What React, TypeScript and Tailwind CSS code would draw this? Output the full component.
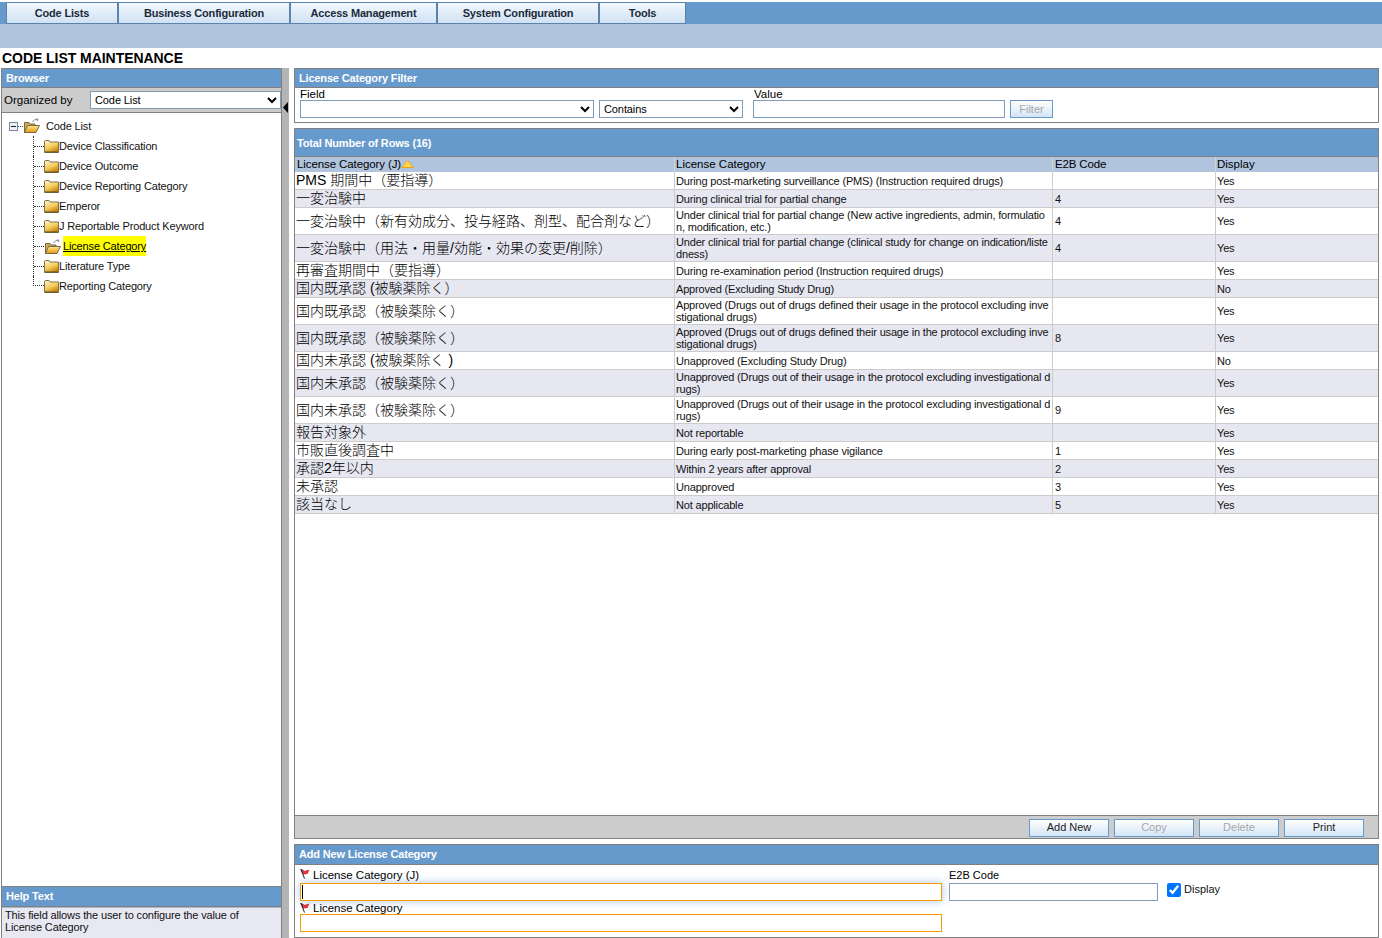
import React from "react";

const navTabs = [
  ["Code Lists", "w-[112px]"],
  ["Business Configuration", "w-[172px]"],
  ["Access Management", "w-[147px]"],
  ["System Configuration", "w-[162px]"],
  ["Tools", "w-[87px]"],
];

const rows: [string, string, string, string, boolean][] = [
  ["PMS 期間中（要指導）", "During post-marketing surveillance (PMS) (Instruction required drugs)", "", "Yes", false],
  ["一変治験中", "During clinical trial for partial change", "4", "Yes", false],
  ["一変治験中（新有効成分、投与経路、剤型、配合剤など）", "Under clinical trial for partial change (New active ingredients, admin, formulatio\nn, modification, etc.)", "4", "Yes", true],
  ["一変治験中（用法・用量/効能・効果の変更/削除）", "Under clinical trial for partial change (clinical study for change on indication/liste\ndness)", "4", "Yes", true],
  ["再審査期間中（要指導）", "During re-examination period (Instruction required drugs)", "", "Yes", false],
  ["国内既承認 (被験薬除く）", "Approved (Excluding Study Drug)", "", "No", false],
  ["国内既承認（被験薬除く）", "Approved (Drugs out of drugs defined their usage in the protocol excluding inve\nstigational drugs)", "", "Yes", true],
  ["国内既承認（被験薬除く）", "Approved (Drugs out of drugs defined their usage in the protocol excluding inve\nstigational drugs)", "8", "Yes", true],
  ["国内未承認 (被験薬除く )", "Unapproved (Excluding Study Drug)", "", "No", false],
  ["国内未承認（被験薬除く）", "Unapproved (Drugs out of their usage in the protocol excluding investigational d\nrugs)", "", "Yes", true],
  ["国内未承認（被験薬除く）", "Unapproved (Drugs out of their usage in the protocol excluding investigational d\nrugs)", "9", "Yes", true],
  ["報告対象外", "Not reportable", "", "Yes", false],
  ["市販直後調査中", "During early post-marketing phase vigilance", "1", "Yes", false],
  ["承認2年以内", "Within 2 years after approval", "2", "Yes", false],
  ["未承認", "Unapproved", "3", "Yes", false],
  ["該当なし", "Not applicable", "5", "Yes", false],
];

const treeItems = [
  "Device Classification",
  "Device Outcome",
  "Device Reporting Category",
  "Emperor",
  "J Reportable Product Keyword",
  "License Category",
  "Literature Type",
  "Reporting Category",
];

function ClosedFolder() {
  return (
    <svg width="15" height="13" viewBox="0 0 15 13" className="shrink-0">
      <defs>
        <linearGradient id="fc" x1="0" y1="0" x2="0.5" y2="1">
          <stop offset="0" stopColor="#fff8d0" />
          <stop offset="0.6" stopColor="#f4cc5c" />
          <stop offset="1" stopColor="#c98a12" />
        </linearGradient>
      </defs>
      <path d="M0.5 3V1L1.5 0.5H5L6 2H14.5V12.5H0.5Z" fill="url(#fc)" stroke="#7f7250" strokeWidth="1" />
      <path d="M1 12H14" stroke="#5e4a1c" />
    </svg>
  );
}

function OpenFolder() {
  return (
    <svg width="17" height="15" viewBox="0 0 17 15" className="shrink-0">
      <defs>
        <linearGradient id="fo" x1="0" y1="0" x2="0" y2="1">
          <stop offset="0" stopColor="#ffe98f" />
          <stop offset="1" stopColor="#e8980c" />
        </linearGradient>
      </defs>
      <path d="M1.5 14.5V4.5H6L7 6H12V14.5Z" fill="#d2a850" stroke="#77694a" />
      <path d="M1.5 14.5L4.5 7.5H16.5L13 14.5Z" fill="url(#fo)" stroke="#77694a" />
      <path d="M9.5 4C10.5 2 12.5 1 15 1.5M15 1.5L13.5 0.3M15 1.5L13.8 3.1" fill="none" stroke="#7d8794" />
    </svg>
  );
}

function Flag({ className }: { className: string }) {
  return (
    <svg width="11" height="10" viewBox="0 0 11 10" className={`shrink-0 self-start ${className}`}>
      <path d="M0.5 0.5L4 2L9.5 0.5L7.5 5L3 5.5Z" fill="#e8303c" />
      <path d="M0.5 0.5L3.5 1.5M1 0.5L4.5 9.5" stroke="#222" strokeWidth="1" />
    </svg>
  );
}

function PanelHeader({ children, className = "" }: { children: React.ReactNode; className?: string }) {
  return (
    <div className={`bg-[#6699cc] text-white font-bold text-[11px] tracking-[-0.17px] flex items-center px-[4px] border-b border-[#808080] ${className}`}>
      {children}
    </div>
  );
}

function Btn({ label, disabled, className = "w-[80px] leading-[15px]" }: { label: string; disabled?: boolean; className?: string }) {
  return (
    <div
      className={`${className} h-[18px] border border-[#6699cc] bg-gradient-to-b from-white to-[#d3e5f7] text-[11px] text-center ${
        disabled ? "text-[#a8a8a8]" : "text-[#222]"
      }`}
    >
      {label}
    </div>
  );
}

const inputBlue = "block h-[18px] border border-[#7f9db9] bg-white";

export default function App() {
  return (
    <div className="w-[1382px] h-[938px] overflow-hidden bg-white text-black text-[11px] flex flex-col font-['Liberation_Sans','Noto_Sans_CJK_JP',sans-serif]">
      <div className="h-[2px]" />
      <nav className="h-[22px] bg-[#6699cc] flex pl-[6px]">
        {navTabs.map(([t, w]) => (
          <div
            key={t}
            className={`${w} border border-[#5c83ab] bg-gradient-to-b from-[#f2f8fd] to-[#cfe1f4] text-[11px] font-bold tracking-[-0.18px] text-[#1c2a3a] flex items-center justify-center`}
          >
            {t}
          </div>
        ))}
      </nav>
      <div className="h-[24px] bg-[#b0c4de]" />
      <h1 className="h-[20px] pl-[2px] text-[14px] leading-[20px] font-bold tracking-[-0.05px]">CODE LIST MAINTENANCE</h1>

      <div className="flex-1 min-h-0 flex pl-[1px]">
        {/* Left column */}
        <aside className="w-[281px] shrink-0 border border-[#808080] border-b-0 flex flex-col">
          <PanelHeader className="h-[19px]">Browser</PanelHeader>
          <div className="h-[25px] bg-[#cccccc] border-b border-[#808080] flex items-center pl-[2px]">
            <span className="w-[86px] pt-px text-[11.5px] text-black">Organized by</span>
            <select className="w-[191px] h-[18px] border border-[#7f9db9] bg-white text-[11px] tracking-[-0.1px] outline-none" defaultValue="Code List">
              <option>Code List</option>
            </select>
          </div>
          <div className="flex-1 min-h-0 pt-[3px] pl-[7px] tracking-[-0.15px] text-[#111]">
            <div className="flex items-center h-[20px]">
              <span className="w-[9px] h-[9px] border border-[#7a8a9a] bg-[#eef2f6] flex items-center justify-center shrink-0">
                <span className="w-[5px] h-[1px] bg-[#222]" />
              </span>
              <span className="w-[5px] border-t border-dotted border-[#444]" />
              <span className="pb-[2px] flex">
                <OpenFolder />
              </span>
              <span className="ml-[6px]">Code List</span>
            </div>
            <div className="ml-[24px]">
              {treeItems.map((t, i) => {
                const last = i === treeItems.length - 1;
                const active = t === "License Category";
                return (
                  <div key={t} className={`flex items-center h-[20px] ${last ? "" : "border-l border-dotted border-[#333]"}`}>
                    {last ? (
                      <span className="w-[11px] h-[10px] self-start border-l border-b border-dotted border-[#333]" />
                    ) : (
                      <span className="w-[10px] border-t border-dotted border-[#333]" />
                    )}
                    {active ? <OpenFolder /> : <ClosedFolder />}
                    {active ? (
                      <span className="ml-[2px] bg-[#ffff00] underline leading-[20px] h-[20px] text-black">{t}</span>
                    ) : (
                      <span>{t}</span>
                    )}
                  </div>
                );
              })}
            </div>
          </div>
          <div className="border-t border-[#808080]">
            <PanelHeader className="h-[20px]">Help Text</PanelHeader>
            <div className="h-[31px] bg-[#e8e8f2] px-[3px] pt-[1px] leading-[12px] tracking-[-0.14px] text-[#111] border-t border-[#a8b8cc]">
              This field allows the user to configure the value of
              <br />
              License Category
            </div>
          </div>
        </aside>

        {/* Splitter */}
        <div className="w-[7px] shrink-0 bg-[#b4b4b4] flex justify-end pt-[34px]">
          <svg width="6" height="11" viewBox="0 0 6 11">
            <path d="M5 0V11L0 5.5Z" fill="#000" />
          </svg>
        </div>

        {/* Right column */}
        <main className="ml-[5px] w-[1085px] shrink-0 flex flex-col">
          <section className="h-[55px] border border-[#808080]">
            <PanelHeader className="h-[19px]">License Category Filter</PanelHeader>
            <div className="flex pl-[5px] pt-[1px]">
              <div className="w-[294px]">
                <div className="h-[11px] text-[11.5px] leading-[11px] text-black">Field</div>
                <select className={`${inputBlue} w-[294px] text-[11px] outline-none`}>
                  <option></option>
                </select>
              </div>
              <div className="ml-[5px] pt-[11px]">
                <select className={`${inputBlue} w-[144px] text-[11px] tracking-[-0.1px] outline-none`} defaultValue="Contains">
                  <option>Contains</option>
                </select>
              </div>
              <div className="ml-[10px] w-[252px]">
                <div className="h-[11px] pl-px text-[11.5px] leading-[11px] text-black">Value</div>
                <input readOnly className={`${inputBlue} w-[252px] outline-none`} />
              </div>
              <div className="ml-[5px] pt-[11px]">
                <Btn label="Filter" disabled className="w-[43px] leading-[17px]" />
              </div>
            </div>
          </section>

          <section className="mt-[5px] h-[711px] border border-[#808080] flex flex-col">
            <PanelHeader className="h-[28px] pl-[2px] pt-[2px]">Total Number of Rows (16)</PanelHeader>
            <div className="flex-1 min-h-0">
              <table className="w-[1083px] table-fixed border-separate border-spacing-0 text-[11px] tracking-[-0.17px]">
                <colgroup>
                  <col className="w-[379px]" />
                  <col className="w-[378px]" />
                  <col className="w-[163px]" />
                  <col className="w-[163px]" />
                </colgroup>
                <thead>
                  <tr className="bg-[#b0c4de]">
                    {["License Category (J)", "License Category", "E2B Code", "Display"].map((h, i) => (
                      <th
                        key={h + i}
                        className={`h-[15px] p-0 align-top text-left font-normal text-[11.5px] leading-[13px] text-black ${
                          i === 0 ? "pl-[2px] tracking-[-0.1px]" : i === 2 ? "border-l border-[#d4d4d4] pl-[2px] tracking-[-0.15px]" : "border-l border-[#d4d4d4] pl-px tracking-normal"
                        }`}
                      >
                        <span className="flex items-center h-[14px]">
                          {h}
                          {i === 0 && (
                            <svg width="13" height="8" viewBox="0 0 13 8">
                              <path d="M6.5 0.5L12.5 7.5H0.5Z" fill="#ffd84a" stroke="#f0a020" />
                            </svg>
                          )}
                        </span>
                      </th>
                    ))}
                  </tr>
                </thead>
                <tbody>
                  {rows.map(([a, b, c, d, tall], i) => {
                    const bg = i % 2 ? "bg-[#e6e7f1]" : "bg-white";
                    const h = tall ? "h-[27px]" : "h-[18px]";
                    const cell = `${h} p-0 border-b border-[#cccccc] ${bg} align-middle`;
                    const small = "block pt-px";
                    return (
                      <tr key={i}>
                        <td className={`${cell} pl-[1px] text-[14px] font-light tracking-normal whitespace-nowrap overflow-hidden`}>
                          <span className={tall ? "block leading-[16px]" : "block leading-[14px] pb-[2px]"}>{a}</span>
                        </td>
                        <td className={`${cell} border-l pl-[1px] leading-[12px] whitespace-pre text-[#111]`}>
                          <span className={tall ? "block -mt-px" : "block pt-px"}>{b}</span>
                        </td>
                        <td className={`${cell} border-l pl-[2px] leading-[12px] text-[#111]`}>
                          <span className={tall ? "block" : small}>{c}</span>
                        </td>
                        <td className={`${cell} border-l pl-[1px] leading-[12px] text-[#111]`}>
                          <span className={tall ? "block" : small}>{d}</span>
                        </td>
                      </tr>
                    );
                  })}
                </tbody>
              </table>
            </div>
            <div className="h-[23px] bg-[#cccccc] border-t border-[#808080] flex items-center justify-end gap-[5px] pr-[14px] pt-[1px]">
              <Btn label="Add New" />
              <Btn label="Copy" disabled />
              <Btn label="Delete" disabled />
              <Btn label="Print" />
            </div>
          </section>

          <section className="mt-[5px] h-[94px] border border-[#808080]">
            <PanelHeader className="h-[20px]">Add New License Category</PanelHeader>
            <div className="flex pl-[5px]">
              <div className="w-[642px]">
                <div className="h-[18px] flex items-end gap-[2px] pb-px text-[11.5px] leading-[13px] text-black">
                  <Flag className="mt-[4px]" />
                  <span>License Category (J)</span>
                </div>
                <div className="h-[18px] border border-[#f59a00] bg-white flex items-center pl-[1px] shadow-[0_0_10px_rgba(102,153,204,0.55)]">
                  <span className="w-px h-[14px] bg-black" />
                </div>
                <div className="h-[13px] flex items-end gap-[2px] text-[11.5px] leading-[11px] text-black">
                  <Flag className="mt-[2px]" />
                  <span>License Category</span>
                </div>
                <input readOnly className="block w-[642px] h-[18px] border border-[#f59a00] bg-white outline-none" />
              </div>
              <div className="ml-[7px] w-[209px]">
                <div className="h-[18px] flex items-end pb-px text-[11px] leading-[13px] text-black">E2B Code</div>
                <input readOnly className={`${inputBlue} w-[209px] outline-none`} />
              </div>
              <div className="ml-[9px] pt-[18px] flex items-start gap-[3px]">
                <input type="checkbox" checked readOnly className="w-[14px] h-[14px] m-0" />
                <span className="leading-[13px] text-[#111]">Display</span>
              </div>
            </div>
          </section>
        </main>
      </div>
    </div>
  );
}
